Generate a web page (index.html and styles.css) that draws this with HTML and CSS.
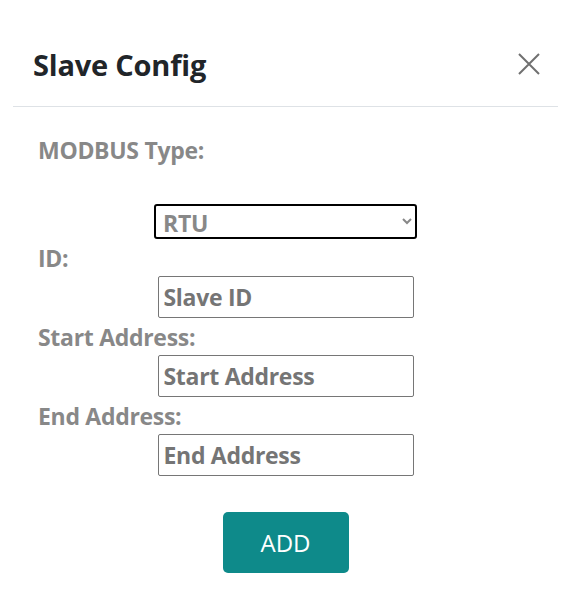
FILE: index.html
```html
<!DOCTYPE html>
<html>
<head>
<meta charset="utf-8">
<link rel="stylesheet" href="styles.css">
</head>
<body>
<div class="modal">
  <div class="header">
    <h5 class="title">Slave Config</h5>
    <button class="close" aria-label="Close">
      <svg width="22" height="22" viewBox="0 0 22 22"><path d="M1 1 L21 21 M21 1 L1 21" stroke="#707070" stroke-width="2" fill="none"/></svg>
    </button>
  </div>
  <div class="body">
    <label class="lbl lbl-type">MODBUS Type:</label>
    <div class="field field-select">
      <select class="sel">
        <option>RTU</option>
      </select>
    </div>
    <label class="lbl">ID:</label>
    <div class="field"><input class="inp" type="text" placeholder="Slave ID"></div>
    <label class="lbl">Start Address:</label>
    <div class="field"><input class="inp" type="text" placeholder="Start Address"></div>
    <label class="lbl">End Address:</label>
    <div class="field"><input class="inp" type="text" placeholder="End Address"></div>
    <div class="actions"><button class="add">ADD</button></div>
  </div>
</div>
</body>
</html>
```

FILE: styles.css
```css
html, body {
  margin: 0;
  padding: 0;
  background: #fff;
}
body {
  font-family: "Open Sans", "Noto Sans", sans-serif;
}
.modal {
  width: 571px;
  height: 597px;
  display: flex;
  flex-direction: column;
}
.header {
  display: flex;
  align-items: center;
  justify-content: space-between;
  margin: 0 13px;
  padding: 22px 18px 0 20px;
  height: 84px;
  border-bottom: 1px solid #dee2e6;
}
.title {
  margin: 0;
  font-size: 29px;
  font-weight: 700;
  color: #212529;
  letter-spacing: -0.2px;
}
.close {
  border: 0;
  background: none;
  padding: 0;
  width: 22px;
  height: 22px;
  display: flex;
}
.body {
  display: flex;
  flex-direction: column;
  padding: 0 0 0 38px;
}
.lbl {
  display: block;
  font-size: 23px;
  font-weight: 700;
  color: #888888;
  line-height: 35px;
  padding-top: 2px;
  letter-spacing: -0.3px;
}
.lbl-type {
  margin-top: 24px;
}
.field {
  display: flex;
  justify-content: center;
  margin-left: -38px;
}
.field-select {
  margin-top: 36px;
}
.sel {
  box-sizing: border-box;
  width: 263px;
  height: 35px;
  border: 2px solid #000;
  border-radius: 3px;
  background: #fff;
  font-family: "Open Sans", "Noto Sans", sans-serif;
  font-size: 23px;
  font-weight: 700;
  color: #888888;
  padding: 0 3px;
  letter-spacing: -0.3px;
}
.inp {
  box-sizing: border-box;
  width: 256px;
  height: 42px;
  border: 1px solid #767676;
  border-radius: 2px;
  padding: 0 5px;
  font-family: "Open Sans", "Noto Sans", sans-serif;
  font-size: 23px;
  font-weight: 700;
  letter-spacing: -0.3px;
}
.inp::placeholder {
  color: #757575;
  opacity: 1;
}
.actions {
  display: flex;
  justify-content: center;
  margin-left: -38px;
  margin-top: 36px;
}
.add {
  width: 126px;
  height: 61px;
  background: #0e8a8a;
  color: #fff;
  border: 0;
  border-radius: 5px;
  font-family: "Open Sans", "Noto Sans", sans-serif;
  font-size: 24px;
  font-weight: 400;
}
```
